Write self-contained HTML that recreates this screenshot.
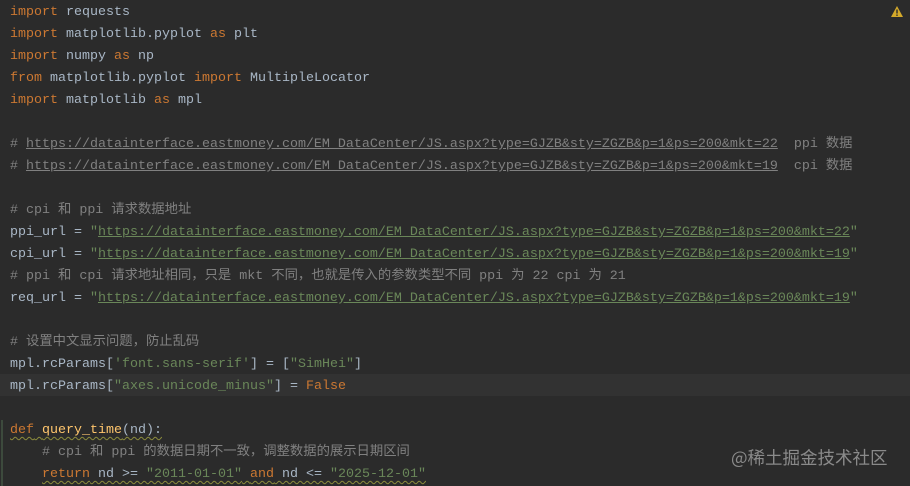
<!DOCTYPE html>
<html><head><meta charset="utf-8"><style>
body{margin:0;width:910px;height:486px;background:#2b2b2b;overflow:hidden;position:relative}
.code{position:absolute;left:10px;top:2px;font-family:"Liberation Mono","Noto Sans CJK SC",monospace;font-size:13.33px;line-height:22px;color:#a9b7c6;white-space:pre}
.k{color:#cc7832}.c{color:#808080}.s{color:#6a8759}.f{color:#ffc66d}
.u{text-decoration:underline}
.w{text-decoration:underline wavy #8c8c3c;text-decoration-thickness:1px;text-underline-offset:3px}
.hl{position:absolute;left:0;top:374px;width:910px;height:22px;background:#323232}
.wm{position:absolute;left:731px;top:445px;font-family:"Noto Sans CJK SC",sans-serif;font-size:17.5px;color:#8a8a8a}
.warn{position:absolute;left:890px;top:5px}
.gl{position:absolute;left:1px;top:420px;width:2px;height:66px;background:#3d4a3d}
</style></head><body>
<div class="hl"></div>
<div class="gl"></div>
<svg class="warn" width="14" height="13" viewBox="0 0 14 13"><path d="M7 1 L13 12 L1 12 Z" fill="#d4a92a"/><rect x="6.3" y="4.5" width="1.4" height="4" fill="#2b2b2b"/><rect x="6.3" y="9.5" width="1.4" height="1.4" fill="#2b2b2b"/></svg>
<div class="code"><span class="k">import</span> requests
<span class="k">import</span> matplotlib.pyplot <span class="k">as</span> plt
<span class="k">import</span> numpy <span class="k">as</span> np
<span class="k">from</span> matplotlib.pyplot <span class="k">import</span> MultipleLocator
<span class="k">import</span> matplotlib <span class="k">as</span> mpl

<span class="c"># <span class="u">https://datainterface.eastmoney.com/EM_DataCenter/JS.aspx?type=GJZB&amp;sty=ZGZB&amp;p=1&amp;ps=200&amp;mkt=22</span>  ppi 数据</span>
<span class="c"># <span class="u">https://datainterface.eastmoney.com/EM_DataCenter/JS.aspx?type=GJZB&amp;sty=ZGZB&amp;p=1&amp;ps=200&amp;mkt=19</span>  cpi 数据</span>

<span class="c"># cpi 和 ppi 请求数据地址</span>
ppi_url = <span class="s">"<span class="u">https://datainterface.eastmoney.com/EM_DataCenter/JS.aspx?type=GJZB&amp;sty=ZGZB&amp;p=1&amp;ps=200&amp;mkt=22</span>"</span>
cpi_url = <span class="s">"<span class="u">https://datainterface.eastmoney.com/EM_DataCenter/JS.aspx?type=GJZB&amp;sty=ZGZB&amp;p=1&amp;ps=200&amp;mkt=19</span>"</span>
<span class="c"># ppi 和 cpi 请求地址相同，只是 mkt 不同，也就是传入的参数类型不同 ppi 为 22 cpi 为 21</span>
req_url = <span class="s">"<span class="u">https://datainterface.eastmoney.com/EM_DataCenter/JS.aspx?type=GJZB&amp;sty=ZGZB&amp;p=1&amp;ps=200&amp;mkt=19</span>"</span>

<span class="c"># 设置中文显示问题，防止乱码</span>
mpl.rcParams[<span class="s">'font.sans-serif'</span>] = [<span class="s">"SimHei"</span>]
mpl.rcParams[<span class="s">"axes.unicode_minus"</span>] = <span class="k">False</span>

<span class="w"><span class="k">def</span> <span class="f">query_time</span>(nd):</span>
    <span class="c"># cpi 和 ppi 的数据日期不一致，调整数据的展示日期区间</span>
    <span class="w"><span class="k">return</span> nd &gt;= <span class="s">"2011-01-01"</span> <span class="k">and</span> nd &lt;= <span class="s">"2025-12-01"</span></span></div>
<div class="wm">@稀土掘金技术社区</div>
</body></html>
